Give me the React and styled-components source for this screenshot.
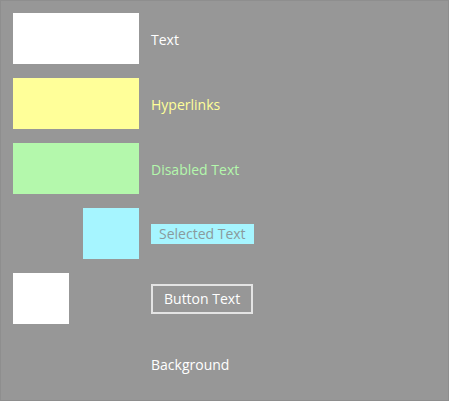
import React from "react";
import { styled, createGlobalStyle } from "styled-components";

const GlobalStyle = createGlobalStyle`
  body {
    margin: 0;
    background: #979797;
  }
`;

const rows = [
  { swatch: "#ffffff", width: 126, align: "end", label: "Text", kind: "plain", color: "#ffffff" },
  { swatch: "#ffff99", width: 126, align: "end", label: "Hyperlinks", kind: "plain", color: "#ffff99" },
  { swatch: "#b4f8ac", width: 126, align: "end", label: "Disabled Text", kind: "plain", color: "#b4f8ac" },
  { swatch: "#a6f5ff", width: 56, align: "end", label: "Selected Text", kind: "selected" },
  { swatch: "#ffffff", width: 56, align: "start", label: "Button Text", kind: "button" },
  { swatch: null, label: "Background", kind: "plain", color: "#ffffff" },
];

export default function App() {
  return (
    <>
      <GlobalStyle />
      <Window>
        <Legend>
          {rows.map((r) => (
            <React.Fragment key={r.label}>
              {r.swatch ? (
                <Swatch $bg={r.swatch} $w={r.width} $align={r.align} />
              ) : (
                <span />
              )}
              <LabelCell>
                {r.kind === "plain" && <Label $color={r.color}>{r.label}</Label>}
                {r.kind === "selected" && <Selected>{r.label}</Selected>}
                {r.kind === "button" && <ButtonText>{r.label}</ButtonText>}
              </LabelCell>
            </React.Fragment>
          ))}
        </Legend>
      </Window>
    </>
  );
}

const Window = styled.div`
  width: 449px;
  height: 401px;
  box-sizing: border-box;
  border: 1px solid #8e8e8e;
  background: #979797;
  padding: 12px;
  font-family: "Open Sans", "Noto Sans", sans-serif;
  font-size: 14px;
`;

const Legend = styled.div`
  display: grid;
  grid-template-columns: 126px 1fr;
  grid-auto-rows: 51px;
  column-gap: 12px;
  row-gap: 14px;
`;

const Swatch = styled.div`
  width: ${(p) => p.$w}px;
  height: 100%;
  background: ${(p) => p.$bg};
  justify-self: ${(p) => p.$align};
`;

const LabelCell = styled.div`
  display: flex;
  align-items: center;
  padding-top: 1px;
`;

const Label = styled.span`
  color: ${(p) => p.$color};
`;

const Selected = styled.span`
  background: #a6f5ff;
  color: #8a9a9c;
  height: 20px;
  line-height: 20px;
  padding: 0 8px;
`;

const ButtonText = styled.span`
  border: 2px solid #e4e4e4;
  color: #ffffff;
  height: 26px;
  line-height: 26px;
  padding: 0 11px;
`;
